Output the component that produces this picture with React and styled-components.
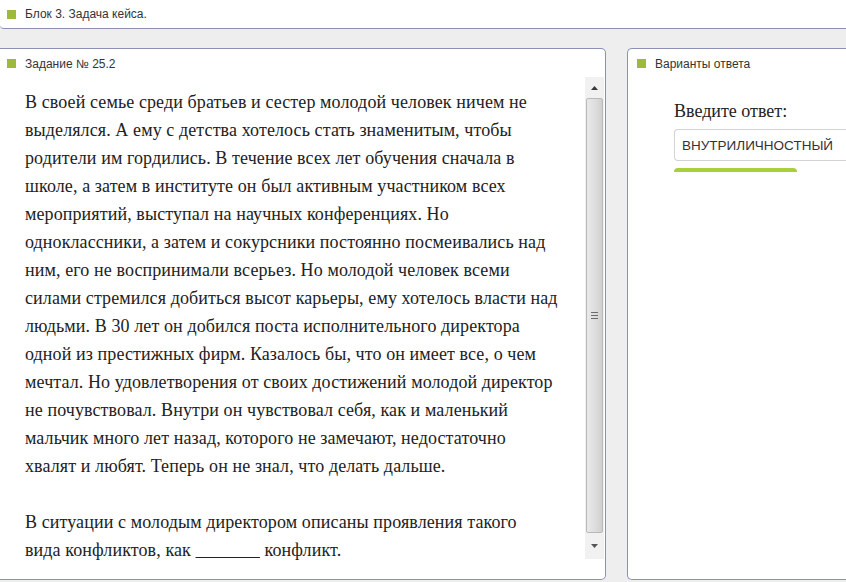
import React from "react";
import styled, { createGlobalStyle } from "styled-components";

const Global = createGlobalStyle`
  html, body { margin: 0; padding: 0; }
  body {
    background: #eeeeef;
    font-family: "Liberation Sans", Arial, sans-serif;
    width: 846px;
    height: 582px;
    overflow: hidden;
  }
`;

const Page = styled.div`
  display: flex;
  flex-direction: column;
  height: 582px;
`;

const TopBar = styled.div`
  height: 29px;
  background: #fff;
  border-bottom: 1px solid #8c90b6;
  border-bottom-left-radius: 4px;
  display: flex;
  align-items: center;
  padding-left: 7px;
  gap: 9px;
  box-sizing: border-box;
`;

const Square = styled.span`
  width: 9px;
  height: 9px;
  background: #9dbb38;
  display: inline-block;
  flex: none;
`;

const Caption = styled.span`
  font-size: 12px;
  color: #333;
  margin-top: ${(p) => p.$dy || 0}px;
`;

const Main = styled.div`
  display: flex;
  gap: 21px;
  margin-top: 19px;
  height: 532px;
`;

const Panel = styled.div`
  background: #fff;
  border: 1px solid #8c90b6;
  box-sizing: border-box;
  height: 532px;
  display: flex;
  flex-direction: column;
`;

const LeftPanel = styled(Panel)`
  width: 606px;
  border-left: none;
  border-radius: 0 5px 5px 0;
`;

const RightPanel = styled(Panel)`
  flex: 1;
  border-right: none;
  border-radius: 5px 0 0 5px;
`;

const PanelHead = styled.div`
  height: 27px;
  display: flex;
  align-items: center;
  gap: 9px;
  padding-left: ${(p) => p.$pl}px;
  padding-top: 1px;
  flex: none;
`;

const Body = styled.div`
  display: flex;
  height: 482px;
`;

const TextArea = styled.div`
  flex: 1;
  padding: 11px 0 0 25px;
  font-family: "Liberation Serif", "Times New Roman", serif;
  font-size: 18px;
  letter-spacing: 0.1px;
  line-height: 28px;
  color: #222;
`;

const Line = styled.div`
  white-space: nowrap;
  height: 28px;
`;

const Blank = styled.span`
  text-decoration: underline;
`;

const Scrollbar = styled.div`
  width: 19px;
  margin-right: 1px;
  background: #f1f1f1;
  display: flex;
  flex-direction: column;
`;

const Arrow = styled.div`
  height: ${(p) => p.$h}px;
  display: flex;
  align-items: center;
  justify-content: center;
  flex: none;
`;

const Thumb = styled.div`
  flex: 1;
  margin: 0 1px;
  border: 1px solid #b9b9b9;
  border-radius: 2px;
  background: linear-gradient(to right, #e9e9e9, #dcdcdc 60%, #cfcfcf);
  display: flex;
  align-items: center;
  justify-content: center;
`;

const Grip = styled.div`
  width: 7px;
  display: flex;
  flex-direction: column;
  gap: 2px;
  & > span {
    height: 1px;
    background: #6b6b6b;
    display: block;
  }
`;

const AnswerBox = styled.div`
  padding: 19px 0 0 46px;
  display: flex;
  flex-direction: column;
`;

const Prompt = styled.div`
  font-family: "Liberation Serif", "Times New Roman", serif;
  font-size: 18px;
  color: #222;
  height: 30px;
  line-height: 30px;
  margin-bottom: 3px;
`;

const Input = styled.div`
  height: 32px;
  border: 1px solid #d3d3d3;
  border-right: none;
  border-radius: 4px 0 0 4px;
  box-sizing: border-box;
  display: flex;
  align-items: center;
  padding-left: 7px;
  font-size: 13.5px;
  color: #333;
  white-space: nowrap;
`;

const Button = styled.div`
  width: 123px;
  height: 4px;
  margin-top: 7px;
  background: #a9cf3c;
  border-radius: 4px 4px 0 0;
`;

const lines = [
  "В своей семье среди братьев и сестер молодой человек ничем не",
  "выделялся. А ему с детства хотелось стать знаменитым, чтобы",
  "родители им гордились. В течение всех лет обучения сначала в",
  "школе, а затем в институте он был активным участником всех",
  "мероприятий, выступал на научных конференциях. Но",
  "одноклассники, а затем и сокурсники постоянно посмеивались над",
  "ним, его не воспринимали всерьез. Но молодой человек всеми",
  "силами стремился добиться высот карьеры, ему хотелось власти над",
  "людьми. В 30 лет он добился поста исполнительного директора",
  "одной из престижных фирм. Казалось бы, что он имеет все, о чем",
  "мечтал. Но удовлетворения от своих достижений молодой директор",
  "не почувствовал. Внутри он чувствовал себя, как и маленький",
  "мальчик много лет назад, которого не замечают, недостаточно",
  "хвалят и любят. Теперь он не знал, что делать дальше.",
];

export default function App() {
  return (
    <>
      <Global />
      <Page>
        <TopBar>
          <Square />
          <Caption $dy={-1}>Блок 3. Задача кейса.</Caption>
        </TopBar>
        <Main>
          <LeftPanel>
            <PanelHead $pl={7}>
              <Square />
              <Caption>Задание № 25.2</Caption>
            </PanelHead>
            <Body>
              <TextArea>
                {lines.map((l, i) => (
                  <Line key={i}>{l}</Line>
                ))}
                <Line>&nbsp;</Line>
                <Line>В ситуации с молодым директором описаны проявления такого</Line>
                <Line>
                  вида конфликтов, как <Blank>{"\u00a0".repeat(14)}</Blank> конфликт.
                </Line>
              </TextArea>
              <Scrollbar>
                <Arrow $h={21}>
                  <svg width="7" height="4" viewBox="0 0 7 4">
                    <path d="M0 4 L3.5 0 L7 4 Z" fill="#3a3a3a" />
                  </svg>
                </Arrow>
                <Thumb>
                  <Grip>
                    <span />
                    <span />
                    <span />
                  </Grip>
                </Thumb>
                <Arrow $h={26}>
                  <svg width="7" height="4" viewBox="0 0 7 4">
                    <path d="M0 0 L7 0 L3.5 4 Z" fill="#555" />
                  </svg>
                </Arrow>
              </Scrollbar>
            </Body>
          </LeftPanel>
          <RightPanel>
            <PanelHead $pl={9}>
              <Square />
              <Caption>Варианты ответа</Caption>
            </PanelHead>
            <AnswerBox>
              <Prompt>Введите ответ:</Prompt>
              <Input>ВНУТРИЛИЧНОСТНЫЙ</Input>
              <Button />
            </AnswerBox>
          </RightPanel>
        </Main>
      </Page>
    </>
  );
}
